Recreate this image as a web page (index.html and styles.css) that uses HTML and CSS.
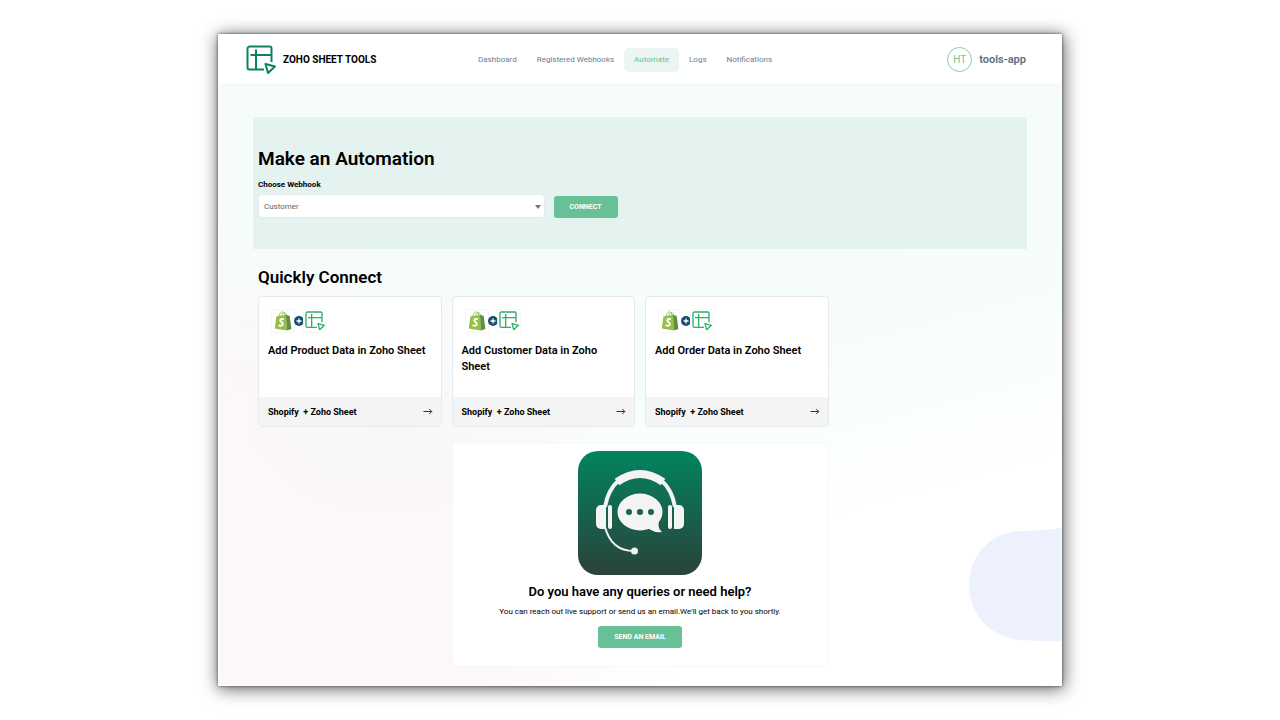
FILE: index.html
```html
<!DOCTYPE html>
<html lang="en">
<head>
<meta charset="utf-8">
<title>Zoho Sheet Tools</title>
<link rel="stylesheet" href="styles.css">
</head>
<body>
<svg class="defs" aria-hidden="true">
  <symbol id="sheet" viewBox="0 0 30 30">
    <g fill="none" stroke="currentColor" stroke-linejoin="round">
      <path d="M25.500 17V3.500a2 2 0 0 0-2-2h-20a2 2 0 0 0-2 2v19a2 2 0 0 0 2 2H18"/>
      <path d="M10 4.500v20M4.500 10h21"/>
      <path d="M19.500 19l9.500 2.500-7 6.500z"/>
    </g>
  </symbol>
  <symbol id="shopify" viewBox="0 0 18 20">
    <path d="M2.300 5.500L12 3.700l.7 15.900L.8 17.400z" fill="#95bf47"/>
    <path d="M12 3.700l3.700 1.400 1.700 12.900-4.700 1.600z" fill="#5e8e3e"/>
    <path d="M4.800 5.500C5.500 2.500 7 .8 8.500.9S11 3 11 4.200M7.800 4.800C8 2.500 9.300 1.500 10.500 1.700s1.700 1.200 1.900 2.300" fill="none" stroke="#95bf47"/>
    <path d="M9.900 8.300C8.700 7.700 6.300 7.800 6.200 9.300c-.1 1.600 2.700 1.700 2.600 3.700-.1 1.900-2.400 2.200-4.300 1" fill="none" stroke="#fff" stroke-width="1.900"/>
  </symbol>
  <symbol id="plus" viewBox="0 0 10 10">
    <circle cx="5" cy="5" r="5" fill="#174e6c"/>
    <path d="M5 2.500v5M2.500 5h5" stroke="#fff" stroke-width="1.300"/>
  </symbol>
  <symbol id="arrow" viewBox="0 0 10 8">
    <path d="M.5 3.500h8M6.300 1l2.500 2.500L6.300 6" fill="none" stroke="currentColor" stroke-width=".8"/>
  </symbol>
</svg>

<div class="app">
  <svg class="blob" viewBox="0 0 92 114" aria-hidden="true"><path d="M92 0C78 2 68 3 52 3 20 4 0 29 0 57c0 30 24 54 52 55 14 1 26 1 40 1z" fill="#edf1fe"/></svg>

  <header class="header">
    <div class="brand">
      <svg class="brand-icon" aria-hidden="true"><use href="#sheet"/></svg>
      <span>ZOHO SHEET TOOLS</span>
    </div>
    <nav class="nav">
      <a href="#">Dashboard</a>
      <a href="#">Registered Webhooks</a>
      <a href="#" class="active" aria-current="page">Automate</a>
      <a href="#">Logs</a>
      <a href="#">Notifications</a>
    </nav>
    <div class="user"><span class="avatar">HT</span><span>tools-app</span></div>
  </header>

  <main class="main">
    <section class="hero">
      <h1>Make an Automation</h1>
      <form class="webhook">
        <label for="webhook">Choose Webhook</label>
        <div class="webhook-row">
          <div class="select-wrap">
            <select id="webhook"><option>Customer</option></select>
          </div>
          <button type="button" class="btn">CONNECT</button>
        </div>
      </form>
    </section>

    <section class="quick">
      <h2>Quickly Connect</h2>
      <div class="grid">
        <article class="card">
          <div class="card-body">
            <div class="icons"><span class="tile"><svg class="bag"><use href="#shopify"/></svg></span><svg class="plus"><use href="#plus"/></svg><span class="tile"><svg class="sheet"><use href="#sheet"/></svg></span></div>
            <h3>Add Product Data in Zoho Sheet</h3>
          </div>
          <a class="card-foot" href="#"><span>Shopify &nbsp;+ Zoho Sheet</span><svg class="arrow"><use href="#arrow"/></svg></a>
        </article>
        <article class="card">
          <div class="card-body">
            <div class="icons"><span class="tile"><svg class="bag"><use href="#shopify"/></svg></span><svg class="plus"><use href="#plus"/></svg><span class="tile"><svg class="sheet"><use href="#sheet"/></svg></span></div>
            <h3>Add Customer Data in Zoho Sheet</h3>
          </div>
          <a class="card-foot" href="#"><span>Shopify &nbsp;+ Zoho Sheet</span><svg class="arrow"><use href="#arrow"/></svg></a>
        </article>
        <article class="card">
          <div class="card-body">
            <div class="icons"><span class="tile"><svg class="bag"><use href="#shopify"/></svg></span><svg class="plus"><use href="#plus"/></svg><span class="tile"><svg class="sheet"><use href="#sheet"/></svg></span></div>
            <h3>Add Order Data in Zoho Sheet</h3>
          </div>
          <a class="card-foot" href="#"><span>Shopify &nbsp;+ Zoho Sheet</span><svg class="arrow"><use href="#arrow"/></svg></a>
        </article>

        <section class="support">
          <svg class="support-icon" viewBox="0 0 124 124" aria-hidden="true">
            <defs><linearGradient id="g" x1="0" y1="0" x2="0" y2="1"><stop offset="0" stop-color="#02845f"/><stop offset="1" stop-color="#2b423b"/></linearGradient></defs>
            <rect width="124" height="124" rx="20" fill="url(#g)"/>
            <g fill="none" stroke="#f4f4f4">
              <path d="M27 56C29 44 33 36 41 29M97 56C95 44 91 36 83 29" stroke-width="4"/>
              <path d="M39 31Q62 15 85 31" stroke-width="8" stroke-linejoin="round"/>
              <path d="M27 76c4 15 13 24 29 24" stroke-width="2"/>
            </g>
            <g fill="#f4f4f4">
              <path d="M26 54v24h-3a5 5 0 0 1-5-5V59a5 5 0 0 1 5-5z"/>
              <path d="M25 54h3v24h-3z"/>
              <rect x="30" y="54" width="4" height="24" rx="2"/>
              <rect x="90" y="54" width="4" height="24" rx="2"/>
              <path d="M96 54h5a5 5 0 0 1 5 5v14a5 5 0 0 1-5 5h-5z"/>
              <ellipse cx="62" cy="61" rx="22.500" ry="18.500"/>
              <path d="M82 66c-3 9-1 12 2 15-6 1-11-1-15-5z"/>
              <circle cx="56.500" cy="100" r="3.500"/>
            </g>
            <g fill="#18604c"><circle cx="51" cy="61" r="3"/><circle cx="62" cy="61" r="3"/><circle cx="73" cy="61" r="3"/></g>
          </svg>
          <h2>Do you have any queries or need help?</h2>
          <p>You can reach out live support or send us an email.We'll get back to you shortly.</p>
          <button type="button" class="btn">SEND AN EMAIL</button>
        </section>
      </div>
    </section>
  </main>
</div>
</body>
</html>
```
FILE: styles.css
```css
* { box-sizing: border-box; }
body {
  margin: 0;
  padding: 34px 218px;
  background: #fff;
  color: #000;
  font-family: Roboto, "Liberation Sans", sans-serif;
  font-size: 8px;
}
h1, h2, h3, p { margin: 0; }
a { color: inherit; text-decoration: none; }
svg { display: block; flex: none; }
.defs { position: absolute; width: 0; height: 0; }

.app {
  position: relative;
  border: 1px solid #fff;
  background:
    radial-gradient(ellipse 170px 120px at 20% 58%, rgba(245, 248, 251, .8), transparent),
    radial-gradient(ellipse 420px 390px at 5% 88%, #fdf7f9 55%, transparent),
    linear-gradient(165deg, #f5fcfb 35%, #f7fdfd 55%, #fff 74%);
  box-shadow: 0 0 3px rgba(0, 0, 0, .6), 1px 2px 16px 1px rgba(0, 0, 0, .6);
}
.blob { position: absolute; right: 0; bottom: 43px; width: 92px; height: 114px; }

.header {
  display: flex;
  align-items: center;
  height: 50px;
  padding: 0 35px 0 27px;
  background: #fff;
  border-bottom: 1px solid #f0f5f5;
}
.brand {
  display: flex;
  align-items: center;
  gap: 7px;
  flex: 0 0 222px;
  font-size: 10px;
  font-weight: 700;
}
.brand-icon { width: 30px; height: 30px; color: #0b8262; stroke-width: 2; }
.nav { display: flex; color: #6b7c93; }
.nav a { padding: 0 10px; line-height: 24px; border-radius: 5px; }
.nav .active { background: #ebf5f3; color: #67c096; }
.user {
  display: flex;
  align-items: center;
  gap: 7px;
  margin-left: auto;
  color: #5b6b80;
  font-size: 11px;
  font-weight: 600;
}
.avatar {
  width: 25px;
  height: 25px;
  border: 1px solid #84cdaa;
  border-radius: 50%;
  color: #72c49c;
  font-size: 10px;
  font-weight: 400;
  line-height: 23px;
  text-align: center;
}

.main { padding: 32px 34px 18px; }
.hero { padding: 29px 5px 31px; background: #e4f3f0; }
h1 { font-size: 19px; line-height: 26px; font-weight: 600; }
.webhook label { display: block; margin-top: 7px; font-weight: 700; line-height: 12px; }
.webhook-row { display: flex; align-items: flex-end; gap: 9px; margin-top: 3px; }
.select-wrap { position: relative; width: 37.500%; }
.select-wrap::after {
  content: "";
  position: absolute;
  right: 4px;
  top: 11px;
  border: 3px solid transparent;
  border-top: 4px solid #777;
  border-bottom: 0;
  pointer-events: none;
}
select {
  appearance: none;
  display: block;
  width: 100%;
  height: 24px;
  padding: 0 5px;
  border: 1px solid #e4eaea;
  border-radius: 4px;
  background: #fff;
  color: #5c646b;
  font: inherit;
}
.btn {
  height: 22px;
  padding: 0 16px;
  border: 0;
  border-radius: 3px;
  background: #67c096;
  color: #fff;
  font: 700 7px/22px Roboto, "Liberation Sans", sans-serif;
}

.quick { padding: 16px 5px 0; }
.quick > h2 { font-size: 17px; line-height: 24px; font-weight: 600; }
.grid {
  display: grid;
  grid-template-columns: repeat(4, 1fr);
  gap: 15px 10px;
  margin-top: 7px;
}
.card {
  display: flex;
  flex-direction: column;
  overflow: hidden;
  border: 1px solid #e7eaeb;
  border-radius: 4px;
  background: #fff;
}
.card-body { min-height: 100px; padding: 12px 9px 0; }
.icons { display: flex; align-items: center; padding-left: 3px; }
.tile {
  display: flex;
  align-items: center;
  justify-content: center;
  width: 24px;
  height: 24px;
  border: 1px solid #f5f5f5;
  border-radius: 3px;
}
.tile + .plus { margin: 0 -1px; }
.bag { width: 18px; height: 20px; }
.plus { width: 10px; height: 10px; }
.sheet { width: 20px; height: 20px; color: #2bb06a; stroke-width: 2; }
h3 { margin-top: 10px; font-size: 11px; line-height: 16px; font-weight: 600; }
.card-foot {
  display: flex;
  align-items: center;
  justify-content: space-between;
  height: 29px;
  padding: 0 8px 0 9px;
  background: #f4f4f4;
  font-size: 9px;
  font-weight: 700;
}
.arrow { width: 10px; height: 8px; }

.support {
  grid-column: 2 / span 2;
  display: flex;
  flex-direction: column;
  align-items: center;
  padding: 8px 8px 18px;
  border: 1px solid #f5f8f8;
  border-radius: 6px;
  background: #fff;
}
.support-icon { width: 124px; height: 124px; }
.support h2 { margin-top: 8px; font-size: 13px; line-height: 18px; font-weight: 600; }
.support p { margin: 5px 0 8px; line-height: 12px; }
```
